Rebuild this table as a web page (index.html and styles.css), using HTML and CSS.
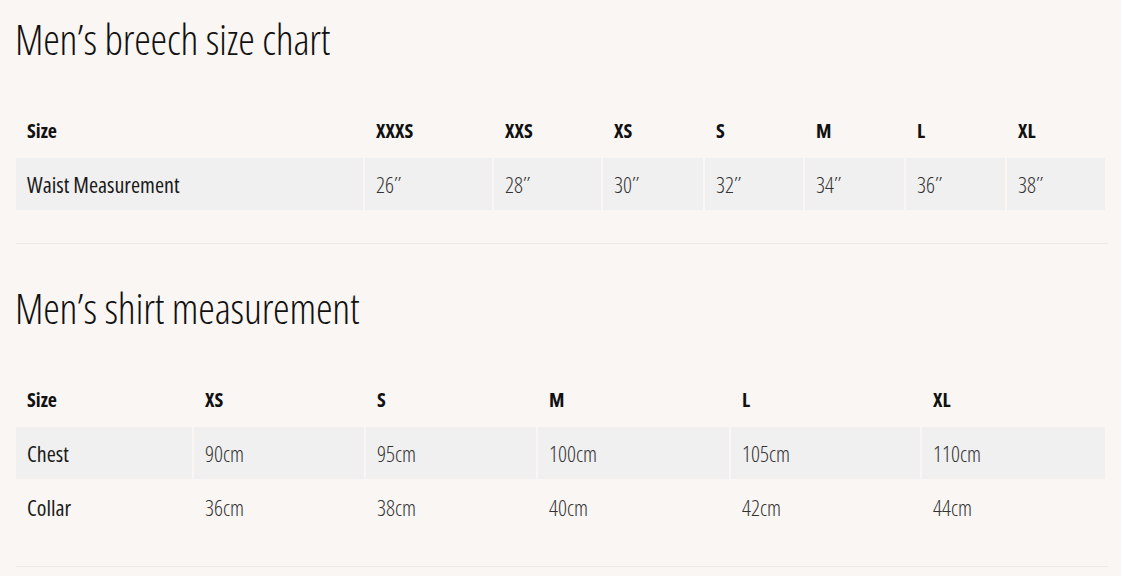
FILE: index.html
```html
<!DOCTYPE html>
<html lang="en">
<head>
<meta charset="utf-8">
<title>Size charts</title>
<link rel="stylesheet" href="styles.css">
</head>
<body>
<main class="page">
  <section class="chart">
    <h2 class="chart-title">Men’s breech size chart</h2>
    <table class="size-table breech">
      <colgroup>
        <col class="c1"><col class="c2"><col class="c3"><col class="c4"><col class="c5"><col class="c6"><col class="c7"><col class="c8">
      </colgroup>
      <thead>
        <tr><th>Size</th><th>XXXS</th><th>XXS</th><th>XS</th><th>S</th><th>M</th><th>L</th><th>XL</th></tr>
      </thead>
      <tbody>
        <tr class="shade"><td class="label">Waist Measurement</td><td>26″</td><td>28″</td><td>30″</td><td>32″</td><td>34″</td><td>36″</td><td>38″</td></tr>
      </tbody>
    </table>
    <hr class="rule">
  </section>
  <section class="chart">
    <h2 class="chart-title">Men’s shirt measurement</h2>
    <table class="size-table shirt">
      <colgroup>
        <col class="c1"><col class="c2"><col class="c3"><col class="c4"><col class="c5"><col class="c6">
      </colgroup>
      <thead>
        <tr><th>Size</th><th>XS</th><th>S</th><th>M</th><th>L</th><th>XL</th></tr>
      </thead>
      <tbody>
        <tr class="shade"><td class="label">Chest</td><td>90cm</td><td>95cm</td><td>100cm</td><td>105cm</td><td>110cm</td></tr>
        <tr><td class="label">Collar</td><td>36cm</td><td>38cm</td><td>40cm</td><td>42cm</td><td>44cm</td></tr>
      </tbody>
    </table>
    <hr class="rule">
  </section>
</main>
</body>
</html>
```
FILE: styles.css
```css
html, body {
  margin: 0;
  padding: 0;
  background: #faf6f3;
}
body {
  font-family: "Open Sans", "Liberation Sans", sans-serif;
  font-stretch: 75%;
  color: #1a1a1a;
}
.page {
  padding: 6px 13px 0 14px;
}
.chart + .chart {
  margin-top: 31px;
}
.chart-title {
  margin: 0 0 36px 1px;
  padding-top: 3px;
  height: 57px;
  line-height: 60px;
  font-size: 42px;
  font-weight: 300;
  color: #111;
  letter-spacing: -0.2px;
}
.size-table {
  width: 1093px;
  table-layout: fixed;
  border-collapse: separate;
  border-spacing: 2px;
}
.size-table th,
.size-table td {
  height: 52px;
  padding: 0 11px;
  text-align: left;
  vertical-align: middle;
  box-sizing: border-box;
}
.size-table th {
  font-size: 20px;
  font-weight: 700;
  color: #111;
}
.size-table td {
  font-size: 22px;
  font-weight: 300;
  color: #333;
}
.size-table td.label {
  font-weight: 400;
  color: #1a1a1a;
}
.shade td {
  background: #f0f0f0;
}
.breech .c1 { width: 347px; }
.breech .c2 { width: 127px; }
.breech .c3 { width: 107px; }
.breech .c4 { width: 100px; }
.breech .c5 { width: 98px; }
.breech .c6 { width: 99px; }
.breech .c7 { width: 99px; }
.breech .c8 { width: 98px; }
.shirt .c1 { width: 176px; }
.shirt .c2 { width: 170px; }
.shirt .c3 { width: 170px; }
.shirt .c4 { width: 191px; }
.shirt .c5 { width: 189px; }
.shirt .c6 { width: 183px; }
.rule {
  margin: 31px 0 0 2px;
  width: 1092px;
  height: 0;
  border: 0;
  border-top: 1px solid #eee9e6;
}
```
